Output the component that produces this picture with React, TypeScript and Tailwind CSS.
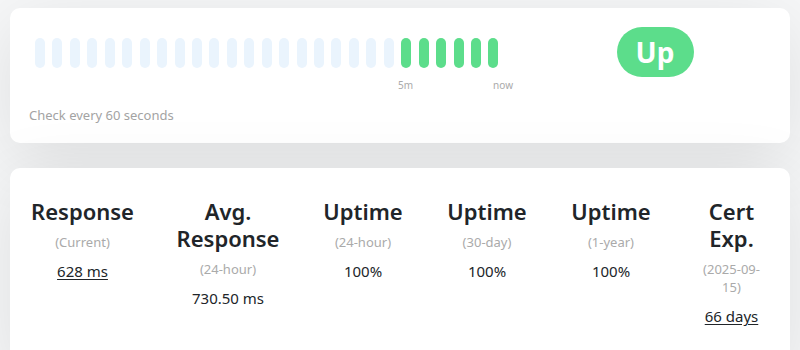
const beats: ("empty" | "up")[] = [
  ...Array.from({ length: 21 }, () => "empty" as const),
  ...Array.from({ length: 6 }, () => "up" as const),
];

const stats = [
  { title: "Response", sub: "(Current)", value: "628 ms", link: true },
  { title: "Avg. Response", sub: "(24-hour)", value: "730.50 ms", link: false },
  { title: "Uptime", sub: "(24-hour)", value: "100%", link: false },
  { title: "Uptime", sub: "(30-day)", value: "100%", link: false },
  { title: "Uptime", sub: "(1-year)", value: "100%", link: false },
  { title: "Cert Exp.", sub: "(2025-09-15)", value: "66 days", link: true },
];

export default function App() {
  return (
    <div
      className="h-[350px] w-[800px] overflow-hidden bg-[#f6f7f8] pt-[8px] text-[#212529]"
      style={{ fontFamily: '"Noto Sans", "Open Sans", sans-serif' }}
    >
      {/* heartbeat card */}
      <div className="mx-[10px] h-[135px] rounded-[10px] bg-white shadow-[0_15px_70px_rgba(0,0,0,0.1)]">
        <div className="flex">
          <div className="w-[510px] shrink-0">
            <div className="flex gap-[7.45px] pl-[25px] pt-[30px]">
              {beats.map((b, i) => (
                <div
                  key={i}
                  className={`h-[30px] w-[10px] rounded-full ${b === "up" ? "bg-[#5cdd8b]" : "bg-[#eaf4fd]"}`}
                />
              ))}
            </div>
            <div className="ml-[388px] mt-[10px] flex w-[115px] justify-between text-[10px] leading-[14px] text-[#aaa]">
              <span>5m</span>
              <span>now</span>
            </div>
          </div>
          <div className="flex flex-1 justify-center pt-[19px]">
            <div className="flex h-[50px] w-[77px] items-center justify-center rounded-full bg-[#5cdd8b] text-[28px] font-bold text-white">
              Up
            </div>
          </div>
        </div>
        <div className="pl-[19px] pt-[14px] text-[13px] leading-[18px] text-[#a3a3a3]">
          Check every 60 seconds
        </div>
      </div>

      {/* stats card */}
      <div className="mx-[10px] mt-[25px] h-[200px] rounded-[10px] bg-white pt-[30px] shadow-[0_15px_70px_rgba(0,0,0,0.1)]">
        <div className="grid grid-cols-[145px_146px_124px_124px_124px_1fr] text-center">
          {stats.map((s, i) => (
            <div key={i} className={i === 5 ? "px-[22px]" : "px-[6px]"}>
              <h4 className="mb-[8px] text-[22px] font-semibold leading-[27px]">{s.title}</h4>
              <p className="mb-[8px] text-[13px] leading-[18px] text-[#aaa]">{s.sub}</p>
              <div className="text-[15px] leading-6">
                {s.link ? <a className="text-[#212529] underline underline-offset-2">{s.value}</a> : s.value}
              </div>
            </div>
          ))}
        </div>
      </div>
    </div>
  );
}
